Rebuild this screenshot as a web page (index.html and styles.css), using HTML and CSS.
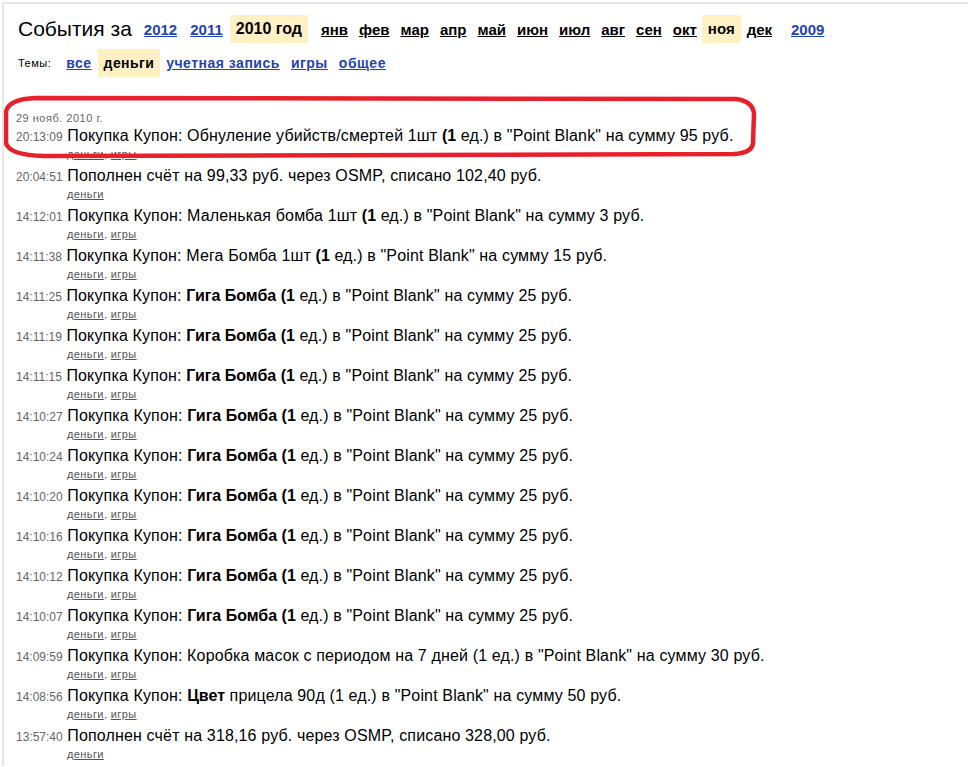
FILE: index.html
```html
<!DOCTYPE html>
<html lang="ru">
<head>
  <meta charset="utf-8">
  <title>События</title>
  <link rel="stylesheet" href="styles.css">
</head>
<body>
  <div class="page">
    <!-- Period selector -->
    <div class="period">
      <span class="title">События за</span>
      <a class="year" href="#">2012</a>
      <a class="year" href="#">2011</a>
      <span class="current year-current">2010 год</span>
      <div class="months">
        <a href="#">янв</a>
        <a href="#">фев</a>
        <a href="#">мар</a>
        <a href="#">апр</a>
        <a href="#">май</a>
        <a href="#">июн</a>
        <a href="#">июл</a>
        <a href="#">авг</a>
        <a href="#">сен</a>
        <a href="#">окт</a>
        <span class="current">ноя</span>
        <a href="#">дек</a>
      </div>
      <a class="year" href="#">2009</a>
    </div>

    <!-- Topics -->
    <div class="topics">
      <span class="topics-label">Темы:</span>
      <a href="#">все</a>
      <span class="current">деньги</span>
      <a href="#">учетная запись</a>
      <a href="#">игры</a>
      <a href="#">общее</a>
    </div>

    <div class="day">
      <div class="day-date">29 нояб. 2010 г.</div>

      <div class="event">
        <div class="event-line"><span class="time">20:13:09</span> Покупка Купон: Обнуление убийств/смертей 1шт <b>(1</b> ед.) в "Point Blank" на сумму 95 руб.</div>
        <div class="tags"><a href="#">деньги</a>, <a href="#">игры</a></div>
      </div>
      <div class="event">
        <div class="event-line"><span class="time">20:04:51</span> Пополнен счёт на 99,33 руб. через OSMP, списано 102,40 руб.</div>
        <div class="tags"><a href="#">деньги</a></div>
      </div>
      <div class="event">
        <div class="event-line"><span class="time">14:12:01</span> Покупка Купон: Маленькая бомба 1шт <b>(1</b> ед.) в "Point Blank" на сумму 3 руб.</div>
        <div class="tags"><a href="#">деньги</a>, <a href="#">игры</a></div>
      </div>
      <div class="event">
        <div class="event-line"><span class="time">14:11:38</span> Покупка Купон: Мега Бомба 1шт <b>(1</b> ед.) в "Point Blank" на сумму 15 руб.</div>
        <div class="tags"><a href="#">деньги</a>, <a href="#">игры</a></div>
      </div>
      <div class="event">
        <div class="event-line"><span class="time">14:11:25</span> Покупка Купон: <b>Гига Бомба (1</b> ед.) в "Point Blank" на сумму 25 руб.</div>
        <div class="tags"><a href="#">деньги</a>, <a href="#">игры</a></div>
      </div>
      <div class="event">
        <div class="event-line"><span class="time">14:11:19</span> Покупка Купон: <b>Гига Бомба (1</b> ед.) в "Point Blank" на сумму 25 руб.</div>
        <div class="tags"><a href="#">деньги</a>, <a href="#">игры</a></div>
      </div>
      <div class="event">
        <div class="event-line"><span class="time">14:11:15</span> Покупка Купон: <b>Гига Бомба (1</b> ед.) в "Point Blank" на сумму 25 руб.</div>
        <div class="tags"><a href="#">деньги</a>, <a href="#">игры</a></div>
      </div>
      <div class="event">
        <div class="event-line"><span class="time">14:10:27</span> Покупка Купон: <b>Гига Бомба (1</b> ед.) в "Point Blank" на сумму 25 руб.</div>
        <div class="tags"><a href="#">деньги</a>, <a href="#">игры</a></div>
      </div>
      <div class="event">
        <div class="event-line"><span class="time">14:10:24</span> Покупка Купон: <b>Гига Бомба (1</b> ед.) в "Point Blank" на сумму 25 руб.</div>
        <div class="tags"><a href="#">деньги</a>, <a href="#">игры</a></div>
      </div>
      <div class="event">
        <div class="event-line"><span class="time">14:10:20</span> Покупка Купон: <b>Гига Бомба (1</b> ед.) в "Point Blank" на сумму 25 руб.</div>
        <div class="tags"><a href="#">деньги</a>, <a href="#">игры</a></div>
      </div>
      <div class="event">
        <div class="event-line"><span class="time">14:10:16</span> Покупка Купон: <b>Гига Бомба (1</b> ед.) в "Point Blank" на сумму 25 руб.</div>
        <div class="tags"><a href="#">деньги</a>, <a href="#">игры</a></div>
      </div>
      <div class="event">
        <div class="event-line"><span class="time">14:10:12</span> Покупка Купон: <b>Гига Бомба (1</b> ед.) в "Point Blank" на сумму 25 руб.</div>
        <div class="tags"><a href="#">деньги</a>, <a href="#">игры</a></div>
      </div>
      <div class="event">
        <div class="event-line"><span class="time">14:10:07</span> Покупка Купон: <b>Гига Бомба (1</b> ед.) в "Point Blank" на сумму 25 руб.</div>
        <div class="tags"><a href="#">деньги</a>, <a href="#">игры</a></div>
      </div>
      <div class="event">
        <div class="event-line"><span class="time">14:09:59</span> Покупка Купон: Коробка масок с периодом на 7 дней (1 ед.) в "Point Blank" на сумму 30 руб.</div>
        <div class="tags"><a href="#">деньги</a>, <a href="#">игры</a></div>
      </div>
      <div class="event">
        <div class="event-line"><span class="time">14:08:56</span> Покупка Купон: <b>Цвет</b> прицела 90д (1 ед.) в "Point Blank" на сумму 50 руб.</div>
        <div class="tags"><a href="#">деньги</a>, <a href="#">игры</a></div>
      </div>
      <div class="event">
        <div class="event-line"><span class="time">13:57:40</span> Пополнен счёт на 318,16 руб. через OSMP, списано 328,00 руб.</div>
        <div class="tags"><a href="#">деньги</a></div>
      </div>
    </div>

    <!-- Red marker drawn over the first event -->
    <svg class="marker" width="968" height="170" viewBox="0 0 968 170">
      <path d="M36 98 L736 99 Q752 101 754 113 L753 143 Q752 153 734 154 L44 156 Q9 155 6 143 L6 112 Q8 99 36 98 Z"
            fill="none" stroke="#e8202a" stroke-width="4.5"/>
    </svg>
  </div>
</body>
</html>
```

FILE: styles.css
```css
body {
  margin: 0;
  font-family: "Liberation Sans", Arial, sans-serif;
  color: #000;
  background: #fff;
}

.page {
  position: relative;
  margin: 2px 0 0 2px;
  border-top: 2px solid #e6e6e6;
  border-left: 2px solid #e6e6e6;
  padding: 11px 0 0 12px;
  height: 751px;
  overflow: hidden;
}

.current {
  background-color: #fff1c4;
  font-weight: bold;
  padding: 5px 6px;
  line-height: 18px;
}

/* Period selector */

.period {
  display: flex;
  align-items: center;
  padding-left: 2px;
}

.title {
  font-size: 21px;
  margin-right: 12px;
}

.year {
  font-size: 15px;
  font-weight: bold;
  color: #2443b0;
  margin-right: 13px;
}

.year-current {
  font-size: 16px;
  margin-left: -6px;
  margin-right: 7px;
}

.months {
  display: flex;
  align-items: center;
  margin-right: 14px;
}

.months a {
  font-size: 15px;
  font-weight: bold;
  color: #000;
  margin: 0 5px 0 6px;
}

.months .current {
  font-size: 15px;
}

/* Topics */

.topics {
  display: flex;
  align-items: center;
  margin-top: 6px;
  padding-left: 2px;
}

.topics-label {
  font-size: 11px;
  letter-spacing: 0.5px;
  margin-right: 15px;
}

.topics a {
  font-size: 14px;
  font-weight: bold;
  letter-spacing: 0.5px;
  color: #2443b0;
  margin-right: 11px;
}

.topics .current {
  font-size: 14px;
  letter-spacing: 0.4px;
  margin-left: -5px;
  margin-right: 6px;
}

/* Event list */

.day {
  margin-top: 34px;
}

.day-date {
  font-size: 11px;
  letter-spacing: 0.5px;
  color: #666;
  line-height: 14px;
  height: 14px;
  margin-bottom: 1px;
}

.event {
  margin-bottom: 4px;
}

.event-line {
  font-size: 16px;
  letter-spacing: 0.15px;
  line-height: 20px;
  height: 20px;
  white-space: nowrap;
}

.event-line b {
  letter-spacing: 0;
}

.time {
  font-size: 12px;
  letter-spacing: 0;
  line-height: 12px;
  color: #666;
}

.tags {
  font-size: 11px;
  letter-spacing: 0.4px;
  line-height: 16px;
  height: 16px;
  color: #555;
  padding-left: 51px;
}

.tags a {
  color: #555;
}

.marker {
  position: absolute;
  left: -4px;
  top: -4px;
  pointer-events: none;
}
```
